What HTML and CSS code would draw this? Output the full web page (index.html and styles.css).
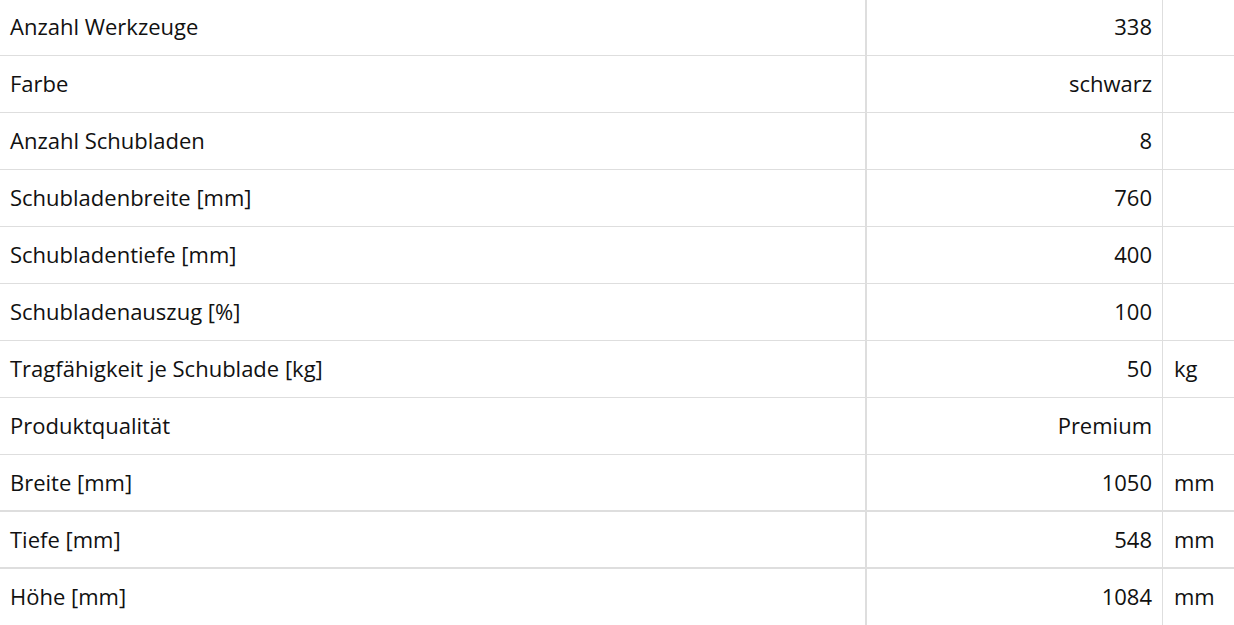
FILE: index.html
```html
<!DOCTYPE html>
<html lang="de">
<head>
<meta charset="utf-8">
<title>Technische Daten</title>
<link rel="stylesheet" href="styles.css">
</head>
<body>
<div class="wrap">
<table class="specs">
  <tbody>
    <tr><td class="label">Anzahl Werkzeuge</td><td class="value">338</td><td class="unit"></td></tr>
    <tr><td class="label">Farbe</td><td class="value">schwarz</td><td class="unit"></td></tr>
    <tr><td class="label">Anzahl Schubladen</td><td class="value">8</td><td class="unit"></td></tr>
    <tr><td class="label">Schubladenbreite [mm]</td><td class="value">760</td><td class="unit"></td></tr>
    <tr><td class="label">Schubladentiefe [mm]</td><td class="value">400</td><td class="unit"></td></tr>
    <tr><td class="label">Schubladenauszug [%]</td><td class="value">100</td><td class="unit"></td></tr>
    <tr><td class="label">Tragfähigkeit je Schublade [kg]</td><td class="value">50</td><td class="unit">kg</td></tr>
    <tr><td class="label">Produktqualität</td><td class="value">Premium</td><td class="unit"></td></tr>
    <tr class="thick"><td class="label">Breite [mm]</td><td class="value">1050</td><td class="unit">mm</td></tr>
    <tr class="thick"><td class="label">Tiefe [mm]</td><td class="value">548</td><td class="unit">mm</td></tr>
    <tr><td class="label">Höhe [mm]</td><td class="value">1084</td><td class="unit">mm</td></tr>
  </tbody>
</table>
</div>
</body>
</html>
```

FILE: styles.css
```css
html, body {
  margin: 0;
  padding: 0;
  background: #fff;
}

body {
  font-family: "Open Sans", "Noto Sans", "Liberation Sans", sans-serif;
  color: #111;
  font-size: 22px;
  overflow: hidden;
}

.wrap {
  margin-top: -1px;
}

.specs {
  width: 1234px;
  border-collapse: collapse;
  table-layout: fixed;
}

.specs td {
  height: 54px;
  padding: 0 0 2px 0;
  border-bottom: 1px solid #dedede;
  vertical-align: middle;
  line-height: 24px;
  white-space: nowrap;
}

.specs tr.thick td {
  border-bottom-width: 2px;
  height: 53px;
}

.specs .label {
  width: 855px;
  padding-left: 10px;
  border-right: 2px solid #dedede;
}

.specs .value {
  width: 285px;
  text-align: right;
  padding-right: 10px;
  border-right: 1px solid #dedede;
}

.specs .unit {
  padding-left: 11px;
}
```
